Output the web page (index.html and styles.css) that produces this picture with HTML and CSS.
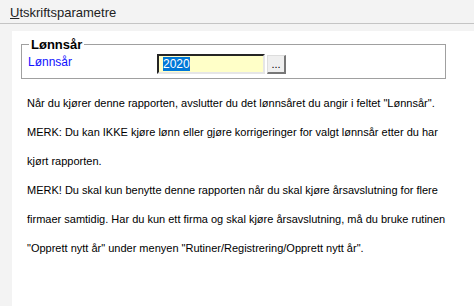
FILE: index.html
```html
<!DOCTYPE html>
<html lang="no">
<head>
    <meta charset="UTF-8">
    <title>Utskriftsparametre</title>
    <link rel="stylesheet" href="styles.css">
</head>
<body>
    <div class="page-title"><span class="key">U</span>tskriftsparametre</div>

    <div class="panel">
        <fieldset class="group">
            <legend>Lønnsår</legend>
            <div class="field-row">
                <label for="year">Lønnsår</label>
                <input type="text" id="year" class="year-input" value="2020">
                <button class="lookup">...</button>
            </div>
        </fieldset>

        <div class="info">
            <p>Når du kjører denne rapporten, avslutter du det lønnsåret du angir i feltet "Lønnsår".</p>
            <p>MERK: Du kan IKKE kjøre lønn eller gjøre korrigeringer for valgt lønnsår etter du har kjørt rapporten.</p>
            <p>MERK! Du skal kun benytte denne rapporten når du skal kjøre årsavslutning for flere firmaer samtidig. Har du kun ett firma og skal kjøre årsavslutning, må du bruke rutinen "Opprett nytt år" under menyen "Rutiner/Registrering/Opprett nytt år".</p>
        </div>
    </div>

    <script>
        const year = document.getElementById('year');
        year.focus();
        year.select();
    </script>
</body>
</html>
```

FILE: styles.css
```css
html, body {
    height: 100%;
}
body {
    margin: 0;
    background-color: #f3f3f3;
    font-family: "Liberation Sans", Arial, sans-serif;
    font-size: 11px;
    color: #000;
    display: flex;
    flex-direction: column;
}
.page-title {
    height: 23px;
    line-height: 25px;
    padding-left: 10px;
    font-size: 13px;
    color: #222;
    border-bottom: 1px solid #c4c4c4;
}
.page-title .key {
    text-decoration: underline;
}
.panel {
    flex: 1;
    margin: 7px 0 0 12px;
    padding: 6px 28px 0 9px;
    background-color: #fff;
}
.group {
    margin: 0;
    padding: 2px 6px 4px 6px;
    border: 1px solid #a0a0a0;
}
.group legend {
    padding: 0 2px;
    margin-left: 1px;
    font-size: 13px;
    font-weight: bold;
}
.field-row {
    display: flex;
    align-items: center;
}
.field-row label {
    width: 129px;
    color: #1010ff;
    font-size: 12px;
    align-self: flex-start;
    margin-top: 1px;
}
.year-input {
    width: 96px;
    height: 16px;
    padding: 0 4px;
    border: 2px inset #e6e6e6;
    border-top-color: #7a7a7a;
    border-left-color: #7a7a7a;
    background-color: #ffffc8;
    font-family: "Liberation Sans", Arial, sans-serif;
    font-size: 12px;
    outline: none;
}
.year-input::selection {
    background-color: #0078d7;
    color: #fff;
}
.lookup {
    width: 19px;
    height: 19px;
    margin-left: 2px;
    padding: 0;
    border: 1px solid #ddd;
    border-right: 2px solid #777;
    border-bottom: 2px solid #777;
    background-color: #efefef;
    font-family: "Liberation Sans", Arial, sans-serif;
    font-size: 11px;
    line-height: 14px;
}
.info {
    padding: 10px 0 0 6px;
}
.info p {
    margin: 0;
    line-height: 29px;
}
```
